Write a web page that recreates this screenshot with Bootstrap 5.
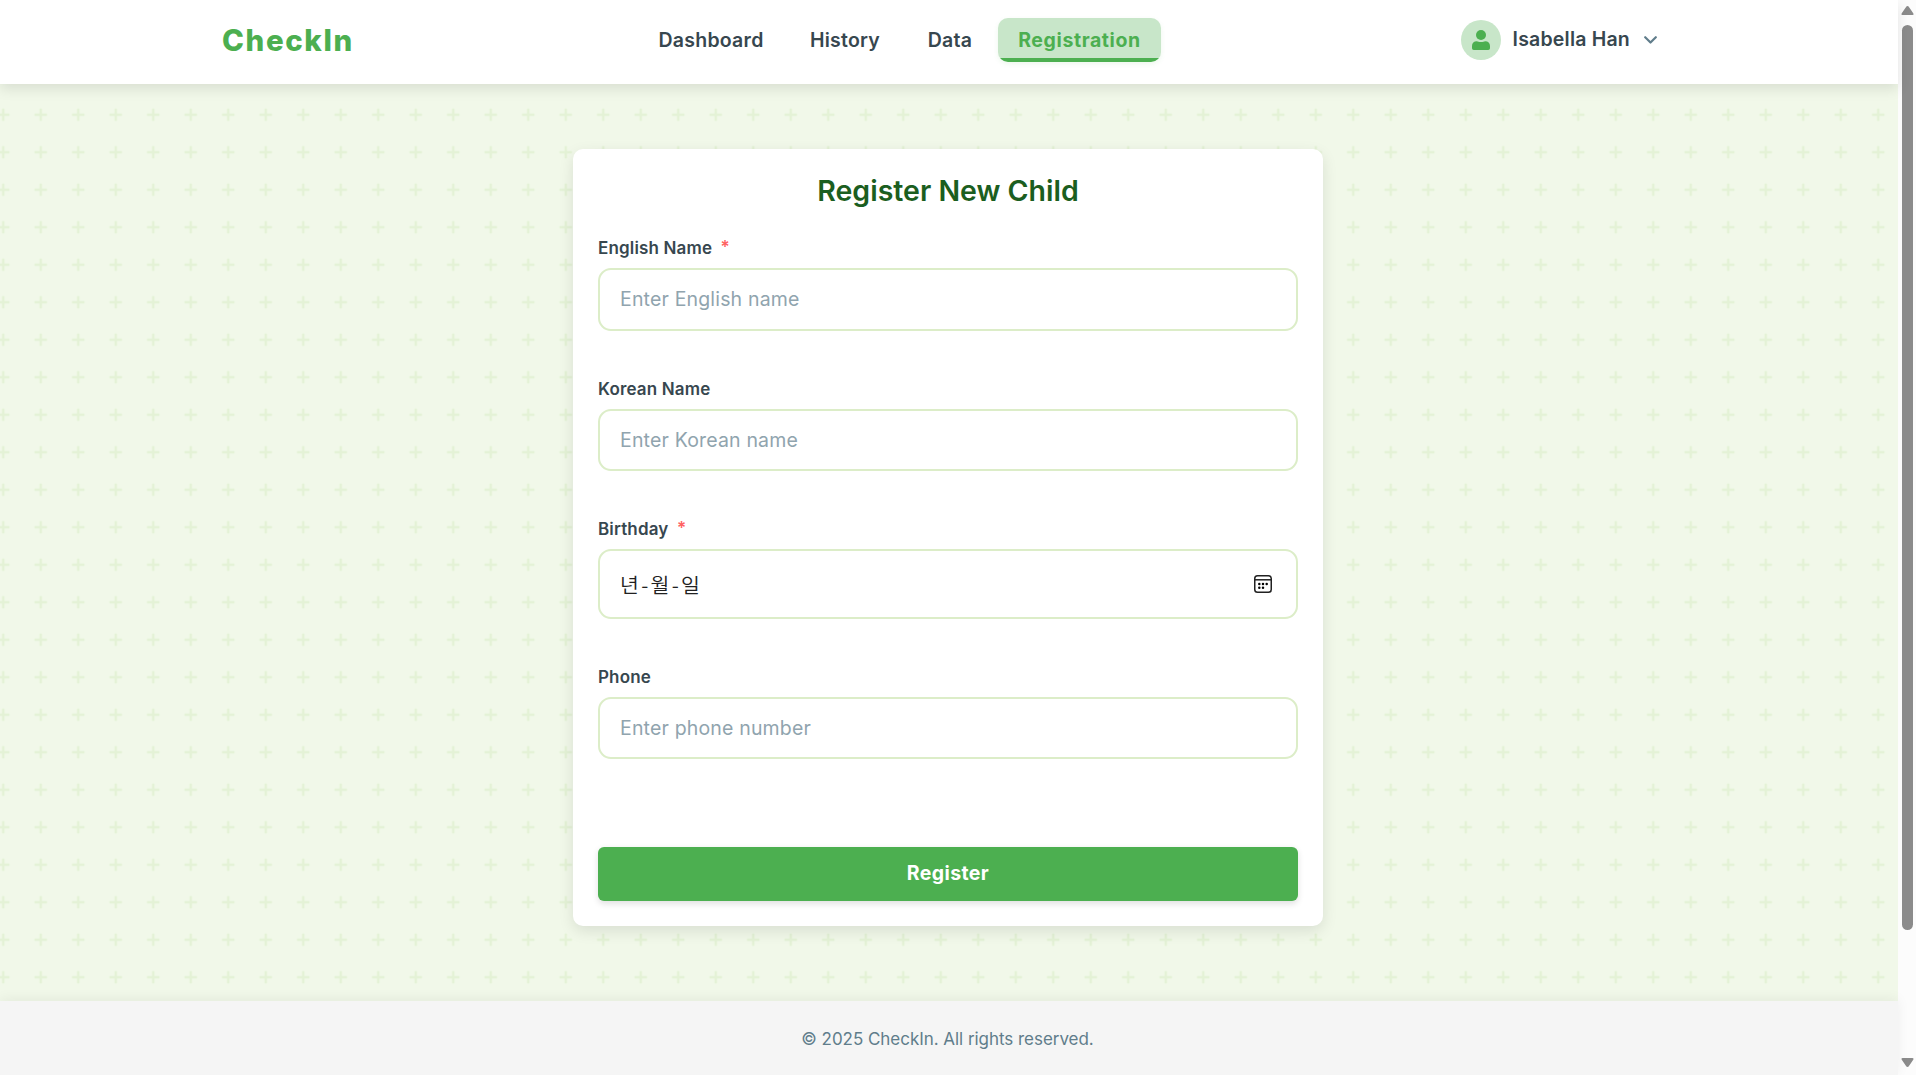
<!DOCTYPE html>
<html lang="en">
<head>
<meta charset="utf-8">
<meta name="viewport" content="width=device-width, initial-scale=1">
<title>CheckIn</title>
<link rel="stylesheet" href="https://cdn.jsdelivr.net/npm/bootstrap@5.3.0/dist/css/bootstrap.min.css">
<style>
  body { font-family: Inter, "Noto Sans CJK KR", sans-serif; color: #37474f; overflow: hidden; background: #fcfcfc; }
  .page { width: 1898px; background: #f1f8e9; }
  .topbar { height: 84px; padding: 0 241px 4px 222px; box-shadow: 0 5px 12.5px rgba(0,0,0,.1); z-index: 2; }
  .brand { width: 417px; font-size: 29.5px; font-weight: 800; letter-spacing: 1.6px; color: #4caf50; line-height: 1; padding-top: 1px; }
  .menu { gap: 5px; font-size: 19.5px; font-weight: 580; }
  .menu a { height: 43.5px; line-height: 44px; padding: 0 18px; color: #37474f; letter-spacing: .25px; text-decoration: none; border-radius: 10px; text-align: center; white-space: nowrap; }
  .menu a.current { background: linear-gradient(#4caf50, #4caf50) bottom / 100% 4px no-repeat #c8e6c9; color: #4caf50; font-weight: 650; letter-spacing: .6px; box-shadow: 0 2px 5px rgba(76,175,80,.1); }
  .avatar { width: 40px; height: 40px; background: #c8e6c9; }
  .user { font-size: 19.5px; font-weight: 580; letter-spacing: .2px; line-height: 1; }
  .user .chevron { margin-left: 14px; }
  .canvas { height: 917px; padding-top: 65px; background-color: #f1f8e9; overflow: hidden; }
  .panel { width: 750px; height: 777px; padding: 0 25px; border-radius: 10px; box-shadow: 0 5px 15px rgba(0,0,0,.1); position: relative; margin-left: 573px; }
  .panel h1 { font-size: 28.5px; font-weight: 580; color: #1b5e20; line-height: 36px; margin: 24px 0 28.2px; letter-spacing: 0; }
  .field { margin-bottom: 46.9px; }
  .field label { display: block; height: 22px; line-height: 22px; margin-bottom: 9px; font-size: 17px; font-weight: 580; letter-spacing: .15px; }
  .field label span { color: #ff5252; opacity: .9; font-size: 17px; margin-left: 4px; vertical-align: 1px; line-height: 1; }
  .field .form-control { height: 62.5px; padding: 0 20px; border: 2px solid #dcedc8; border-radius: 13px; font-size: 19.5px; letter-spacing: .17px; color: #37474f; }
  .field .form-control::placeholder { color: #90a4ae; opacity: 1; }
  .field .date-box { height: 70px; color: #212121; font-family: "Noto Sans CJK KR", sans-serif; letter-spacing: 2.3px; padding-right: 24px; font-size: 20.5px; font-weight: 350; }
  .go { height: 54px; margin-top: 87.300px; padding: 0; border: 0; border-radius: 6px; background: #4caf50; color: #fff; font-size: 19.5px; font-weight: 650; letter-spacing: .4px; box-shadow: 0 2.5px 6px rgba(0,0,0,.12); }
  .foot { height: 74px; padding: 3px 3px 0 0; background: #f5f5f5; color: #607d8b; font-size: 17px; letter-spacing: -.04px; box-shadow: 0 -2px 12px rgba(0,0,0,.06); position: relative; }
  .scroller { width: 18px; background: #fcfcfc; }
</style>
<script src="https://cdn.jsdelivr.net/npm/bootstrap@5.3.0/dist/js/bootstrap.bundle.min.js"></script>
</head>
<body class="d-flex vh-100">
<div class="page flex-shrink-0">
  <header class="topbar bg-white d-flex align-items-center position-relative">
    <div class="brand flex-shrink-0">CheckIn</div>
    <nav class="menu d-flex align-items-center">
      <a href="#" style="width:144px">Dashboard</a>
      <a href="#" style="width:114px">History</a>
      <a href="#" style="width:86px">Data</a>
      <a href="#" class="current" style="width:163px">Registration</a>
    </nav>
    <div class="user d-flex align-items-center ms-auto">
      <div class="avatar rounded-circle d-flex align-items-center justify-content-center">
        <svg width="18" height="20" viewBox="0 0 18 20" fill="#4caf50"><circle cx="9" cy="5" r="5"/><path d="M4.8 11.2c1.200 0 2 .8 4.200.8s3-.8 4.200-.8c2.900 0 4.800 2 4.800 4.800v2.200q0 1.800-1.800 1.800H1.800q-1.800 0-1.800-1.800v-2.200c0-2.800 1.900-4.800 4.800-4.800z"/></svg>
      </div>
      <span class="ms-2 ps-1">Isabella Han</span>
      <svg class="chevron" width="13" height="8" viewBox="0 0 13 8" fill="none" stroke="#607d8b" stroke-width="2.2" stroke-linecap="round" stroke-linejoin="round"><path d="M1.200 1.200 6.500 6.500 11.800 1.200"/></svg>
    </div>
  </header>
  <main class="canvas position-relative">
    <svg class="position-absolute top-0 start-0" width="1898" height="917">
      <defs><pattern id="plus" x="-15.500" y="12" width="37.5" height="37.5" patternUnits="userSpaceOnUse"><path d="M12.500 17.500h5v-5h2.500v5h5v2.500h-5v5h-2.500v-5h-5z" fill="#e4f2d6"/></pattern></defs>
      <rect width="1898" height="917" fill="url(#plus)"/>
    </svg>
    <form class="panel bg-white d-flex flex-column">
      <h1 class="text-center">Register New Child</h1>
      <div class="field"><label>English Name <span>*</span></label><input class="form-control" placeholder="Enter English name"></div>
      <div class="field"><label>Korean Name</label><input class="form-control" placeholder="Enter Korean name"></div>
      <div class="field"><label>Birthday <span>*</span></label>
        <div class="form-control date-box d-flex align-items-center justify-content-between"><span>년-월-일</span>
          <svg width="18" height="18" viewBox="0 0 18 18" fill="none" stroke="#212121" stroke-width="1.500"><rect x=".75" y=".75" width="16.500" height="16.500" rx="2.800"/><path d="M1 4.800h16"/><g fill="#000" stroke="none"><circle cx="5.300" cy="9" r="1.250"/><circle cx="9" cy="9" r="1.250"/><circle cx="12.700" cy="9" r="1.250"/><circle cx="5.300" cy="12.700" r="1.250"/><circle cx="9" cy="12.700" r="1.250"/></g></svg>
        </div></div>
      <div class="field mb-0"><label>Phone</label><input class="form-control" placeholder="Enter phone number"></div>
      <button type="button" class="go btn w-100 flex-shrink-0">Register</button>
    </form>
  </main>
  <footer class="foot d-flex align-items-center justify-content-center">© 2025 CheckIn. All rights reserved.</footer>
</div>
<div class="scroller flex-shrink-0">
  <svg class="d-block" width="18" height="1075" fill="#8b8b8b"><path d="M9.500 6q.8 0 1.300.8l4.600 6.700q.7 1.500-.9 1.500h-10q-1.600 0-.9-1.500l4.600-6.700q.5-.8 1.300-.8z"/><rect x="4" y="25" width="11" height="905" rx="5.500"/><path d="M9.500 1067q.8 0 1.300-.8l4.600-6.700q.7-1.500-.9-1.500h-10q-1.600 0-.9 1.500l4.600 6.700q.5.8 1.300.8z"/></svg>
</div>
</body>
</html>
